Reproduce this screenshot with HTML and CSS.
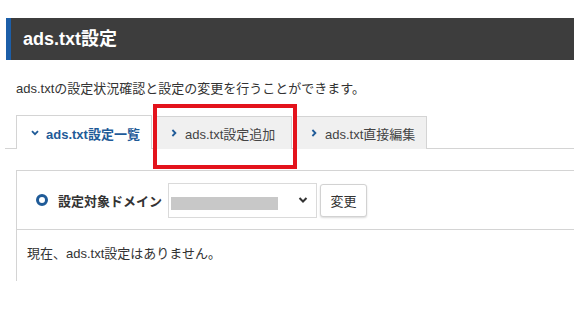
FILE: index.html
```html
<!DOCTYPE html>
<html lang="ja">
<head>
    <meta charset="UTF-8">
    <title>ads.txt設定</title>
    <link rel="stylesheet" href="styles.css">
</head>
<body>
    <div class="page">
        <h1 class="title">ads.txt設定</h1>
        <p class="lead">ads.txtの設定状況確認と設定の変更を行うことができます。</p>

        <div class="tabs">
            <div class="tab active">
                <svg class="chev" width="8" height="8" viewBox="0 0 8 8"><path d="M1 2.2 L4 5.2 L7 2.2" fill="none" stroke="#1f5b98" stroke-width="1.8"/></svg>
                ads.txt設定一覧
            </div>
            <div class="tab">
                <svg class="chev" width="8" height="8" viewBox="0 0 8 8"><path d="M2.4 1 L5.4 4 L2.4 7" fill="none" stroke="#1f5b98" stroke-width="1.8"/></svg>
                ads.txt設定追加
            </div>
            <div class="tab">
                <svg class="chev" width="8" height="8" viewBox="0 0 8 8"><path d="M2.4 1 L5.4 4 L2.4 7" fill="none" stroke="#1f5b98" stroke-width="1.8"/></svg>
                ads.txt直接編集
            </div>
        </div>

        <div class="panel">
            <div class="domain-row">
                <span class="radio"></span>
                <span class="domain-label">設定対象ドメイン</span>
                <div class="select">
                    <span class="blur"></span>
                    <svg width="10" height="8" viewBox="0 0 10 8"><path d="M1.5 2 L5 5.5 L8.5 2" fill="none" stroke="#333" stroke-width="2"/></svg>
                </div>
                <button class="btn">変更</button>
            </div>
            <div class="empty">現在、ads.txt設定はありません。</div>
        </div>

        <div class="highlight"></div>
    </div>
</body>
</html>
```

FILE: styles.css
```css
body {
    margin: 0;
    background: #fff;
    font-family: "Liberation Sans", "Noto Sans CJK JP", sans-serif;
    color: #333;
}

.page {
    position: relative;
    padding-top: 18px;
    padding-left: 6px;
}

.title {
    margin: 0;
    height: 42px;
    line-height: 42px;
    background: #3d3d3d;
    border-left: 5px solid #1c5ea8;
    padding-left: 12px;
    color: #fff;
    font-size: 18px;
    font-weight: bold;
}

.lead {
    margin: 20px 0 0 10px;
    font-size: 13px;
    line-height: 18px;
    color: #333;
}

.tabs {
    display: flex;
    align-items: flex-end;
    margin-top: 17px;
    margin-left: -1px;
    height: 33px;
    border-bottom: 1px solid #d4d4d4;
}

.tabs::before {
    content: "";
    width: 11px;
}

.tab {
    display: flex;
    align-items: center;
    gap: 7px;
    height: 33px;
    width: 137px;
    padding-left: 14px;
    margin-right: 3px;
    margin-bottom: -1px;
    background: #f0f0f0;
    border: 1px solid #d4d4d4;
    border-bottom: none;
    font-size: 13px;
    color: #444;
    box-sizing: border-box;
}

.tab:last-child {
    width: 132px;
}

.tab.active {
    width: 136px;
    height: 34px;
    background: #fff;
    color: #1f5b98;
    font-weight: bold;
    padding-top: 1px;
}

.chev {
    flex: none;
}

.panel {
    margin-top: 21px;
    margin-left: 10px;
    border-top: 1px solid #d4d4d4;
    border-left: 1px solid #d4d4d4;
    height: 110px;
}

.domain-row {
    display: flex;
    align-items: center;
    height: 58px;
    padding-left: 19px;
    border-bottom: 1px solid #d4d4d4;
}

.radio {
    width: 6px;
    height: 6px;
    border: 3px solid #1f5b98;
    border-radius: 50%;
    margin-right: 10px;
}

.domain-label {
    font-size: 13px;
    font-weight: bold;
    color: #333;
    margin-right: 6px;
}

.select {
    display: flex;
    align-items: center;
    justify-content: space-between;
    width: 149px;
    height: 35px;
    box-sizing: border-box;
    border: 1px solid #dadada;
    padding: 0 8px 0 2px;
    margin-right: 3px;
}

.blur {
    width: 107px;
    height: 13px;
    margin-top: 6px;
    background: #c8c8c8;
}

.btn {
    height: 33px;
    width: 47px;
    border: 1px solid #d2d2d2;
    border-radius: 3px;
    background: #fff;
    box-shadow: 0 1px 2px rgba(0, 0, 0, 0.15);
    font-family: "Liberation Sans", "Noto Sans CJK JP", sans-serif;
    font-size: 13px;
    color: #333;
    padding: 0;
}

.empty {
    padding: 13px 0 0 10px;
    font-size: 13px;
    color: #333;
}

.highlight {
    position: absolute;
    left: 153px;
    top: 104px;
    width: 136px;
    height: 57px;
    border: 4px solid #e3131c;
}
```
